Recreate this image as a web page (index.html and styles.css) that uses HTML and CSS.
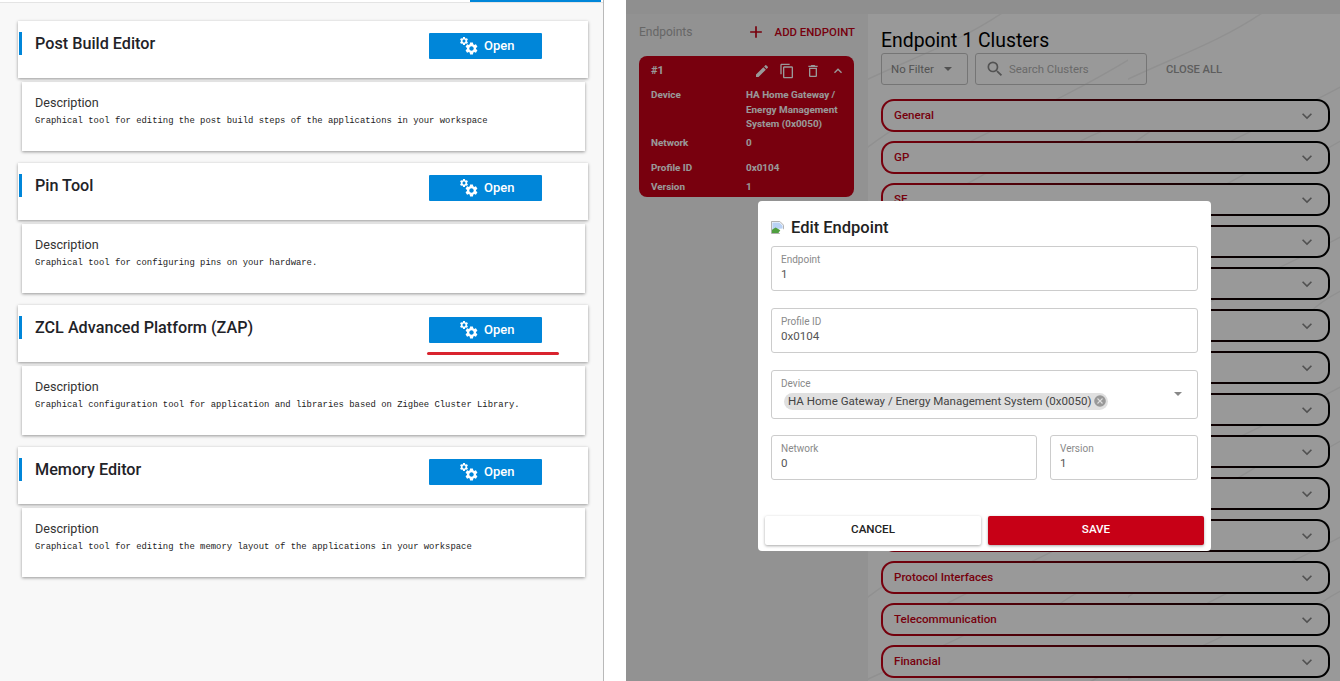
FILE: index.html
```html
<!DOCTYPE html>
<html lang="en">
<head>
<meta charset="utf-8">
<title>Edit Endpoint</title>
<link rel="stylesheet" href="styles.css">
</head>
<body>
<svg class="defs" width="0" height="0" aria-hidden="true">
  <symbol id="gear" viewBox="0 0 24 24"><path d="M19.14 12.94c.04-.3.06-.61.06-.94 0-.32-.02-.64-.07-.94l2.03-1.58a.49.49 0 0 0 .12-.61l-1.92-3.32a.488.488 0 0 0-.59-.22l-2.39.96c-.5-.38-1.03-.7-1.62-.94l-.36-2.54a.484.484 0 0 0-.48-.41h-3.84c-.24 0-.43.17-.47.41l-.36 2.54c-.59.24-1.13.57-1.62.94l-2.39-.96c-.22-.08-.47 0-.59.22L2.74 8.87c-.12.21-.08.47.12.61l2.03 1.58c-.05.3-.09.63-.09.94s.02.64.07.94l-2.03 1.58a.49.49 0 0 0-.12.61l1.92 3.32c.12.22.37.29.59.22l2.39-.96c.5.38 1.03.7 1.62.94l.36 2.54c.05.24.24.41.48.41h3.84c.24 0 .44-.17.47-.41l.36-2.54c.59-.24 1.13-.56 1.62-.94l2.39.96c.22.08.47 0 .59-.22l1.92-3.32c.12-.22.07-.47-.12-.61l-2.01-1.58zM12 15.6c-1.98 0-3.6-1.62-3.6-3.6s1.62-3.6 3.6-3.6 3.6 1.62 3.6 3.6-1.62 3.6-3.6 3.6z"/></symbol>
  <symbol id="cogs" viewBox="0 0 20 20"><use href="#gear" x="0" y="0" width="10" height="10"/><use href="#gear" x="5" y="5" width="15" height="15"/></symbol>
  <symbol id="more" viewBox="0 0 24 24"><path d="M16.59 8.59L12 13.17 7.41 8.59 6 10l6 6 6-6z"/></symbol>
  <pattern id="wave" width="260" height="150" patternUnits="userSpaceOnUse">
    <path d="M-10 70C40 45 90 30 140 -5M60 150C120 115 190 90 270 40M-20 150C0 130 20 120 40 105M180 150C200 130 235 115 270 105" fill="none" stroke="#f1f1f1" stroke-width="1.5"/>
  </pattern>
</svg>

<main class="left">
  <div class="tabstrip"><span class="tab"></span></div>

  <section class="tool">
    <header class="tool-head">
      <h2 class="tool-title">Post Build Editor</h2>
      <button class="open"><svg class="cogs"><use href="#cogs"/></svg>Open</button>
    </header>
    <div class="tool-desc">
      <h3 class="desc-title">Description</h3>
      <p class="desc-text">Graphical tool for editing the post build steps of the applications in your workspace</p>
    </div>
  </section>

  <section class="tool">
    <header class="tool-head">
      <h2 class="tool-title">Pin Tool</h2>
      <button class="open"><svg class="cogs"><use href="#cogs"/></svg>Open</button>
    </header>
    <div class="tool-desc">
      <h3 class="desc-title">Description</h3>
      <p class="desc-text">Graphical tool for configuring pins on your hardware.</p>
    </div>
  </section>

  <section class="tool">
    <header class="tool-head">
      <h2 class="tool-title">ZCL Advanced Platform (ZAP)</h2>
      <button class="open"><svg class="cogs"><use href="#cogs"/></svg>Open</button>
      <span class="underline"></span>
    </header>
    <div class="tool-desc">
      <h3 class="desc-title">Description</h3>
      <p class="desc-text">Graphical configuration tool for application and libraries based on Zigbee Cluster Library.</p>
    </div>
  </section>

  <section class="tool">
    <header class="tool-head">
      <h2 class="tool-title">Memory Editor</h2>
      <button class="open"><svg class="cogs"><use href="#cogs"/></svg>Open</button>
    </header>
    <div class="tool-desc">
      <h3 class="desc-title">Description</h3>
      <p class="desc-text">Graphical tool for editing the memory layout of the applications in your workspace</p>
    </div>
  </section>
</main>

<div class="app">
  <div class="topband"></div>
  <div class="columns">
    <aside class="endpoints">
      <div class="ep-head">
        <span class="ep-label">Endpoints</span>
        <span class="ep-add"><svg class="ep-plus" viewBox="0 0 24 24"><path d="M19 13h-6v6h-2v-6H5v-2h6V5h2v6h6v2z"/></svg>ADD ENDPOINT</span>
      </div>
      <div class="ep-card">
        <div class="ep-card-top">
          <span class="ep-num">#1</span>
          <span class="ep-actions">
            <svg class="ep-icon" viewBox="0 0 24 24"><path d="M3 17.25V21h3.75L17.81 9.94l-3.75-3.75L3 17.25zM20.71 7.04a1 1 0 0 0 0-1.41l-2.34-2.34a1 1 0 0 0-1.41 0l-1.83 1.83 3.75 3.75 1.83-1.83z"/></svg>
            <svg class="ep-icon" viewBox="0 0 24 24"><path d="M16 1H4c-1.1 0-2 .9-2 2v14h2V3h12V1zm3 4H8c-1.1 0-2 .9-2 2v14c0 1.1.9 2 2 2h11c1.1 0 2-.9 2-2V7c0-1.1-.9-2-2-2zm0 16H8V7h11v14z"/></svg>
            <svg class="ep-icon" viewBox="0 0 24 24"><path d="M6 19c0 1.1.9 2 2 2h8c1.1 0 2-.9 2-2V7H6v12zM8 9h8v10H8V9zm7.5-5l-1-1h-5l-1 1H5v2h14V4z"/></svg>
            <svg class="ep-icon" viewBox="0 0 24 24"><path d="M12 8l-6 6 1.41 1.41L12 10.83l4.59 4.58L18 14z"/></svg>
          </span>
        </div>
        <dl class="ep-grid">
          <dt>Device</dt><dd>HA Home Gateway / Energy Management System (0x0050)</dd>
          <dt>Network</dt><dd>0</dd>
          <dt>Profile ID</dt><dd>0x0104</dd>
          <dt>Version</dt><dd>1</dd>
        </dl>
      </div>
    </aside>

    <section class="clusters">
      <svg class="waves" aria-hidden="true"><rect width="100%" height="100%" fill="url(#wave)"/></svg>
      <h1 class="cl-title">Endpoint 1 Clusters</h1>
      <div class="cl-tools">
        <div class="cl-filter">No Filter<span class="caret"></span></div>
        <div class="cl-search"><svg class="cl-search-icon" viewBox="0 0 24 24"><path d="M15.5 14h-.79l-.28-.27A6.471 6.471 0 0 0 16 9.5 6.5 6.5 0 1 0 9.5 16c1.61 0 3.09-.59 4.23-1.57l.27.28v.79l5 4.99L20.49 19l-4.99-5zm-6 0C7.01 14 5 11.99 5 9.5S7.01 5 9.5 5 14 7.01 14 9.5 11.99 14 9.5 14z"/></svg>Search Clusters</div>
        <span class="cl-close">CLOSE ALL</span>
      </div>
      <ul class="cl-list">
        <li class="cl-row"><span>General</span><svg class="chev"><use href="#more"/></svg></li>
        <li class="cl-row"><span>GP</span><svg class="chev"><use href="#more"/></svg></li>
        <li class="cl-row"><span>SE</span><svg class="chev"><use href="#more"/></svg></li>
        <li class="cl-row"><span></span><svg class="chev"><use href="#more"/></svg></li>
        <li class="cl-row"><span></span><svg class="chev"><use href="#more"/></svg></li>
        <li class="cl-row"><span></span><svg class="chev"><use href="#more"/></svg></li>
        <li class="cl-row"><span></span><svg class="chev"><use href="#more"/></svg></li>
        <li class="cl-row"><span></span><svg class="chev"><use href="#more"/></svg></li>
        <li class="cl-row"><span></span><svg class="chev"><use href="#more"/></svg></li>
        <li class="cl-row"><span></span><svg class="chev"><use href="#more"/></svg></li>
        <li class="cl-row"><span></span><svg class="chev"><use href="#more"/></svg></li>
        <li class="cl-row"><span>Protocol Interfaces</span><svg class="chev"><use href="#more"/></svg></li>
        <li class="cl-row"><span>Telecommunication</span><svg class="chev"><use href="#more"/></svg></li>
        <li class="cl-row"><span>Financial</span><svg class="chev"><use href="#more"/></svg></li>
      </ul>
    </section>
  </div>

  <div class="scrim">
    <div class="modal">
      <h2 class="modal-title">
        <svg class="broken" viewBox="0 0 14 14"><path fill="#fff" stroke="#a9a9a9" d="M.5.5h9l4 4v9H.5z"/><path fill="#b9d2f5" d="M1.5 1.5h7.5l3.5 3.5v3l-11 1z"/><path fill="#4f9f3f" d="M1 13V9.5l4-2.5 5 3-2 3z"/><path fill="#fff" d="M9 14l5-6v6z"/></svg>
        Edit Endpoint
      </h2>
      <div class="field"><label>Endpoint</label><div class="value">1</div></div>
      <div class="field"><label>Profile ID</label><div class="value">0x0104</div></div>
      <div class="field field-device">
        <label>Device</label>
        <div class="chip">HA Home Gateway / Energy Management System (0x0050)<svg class="chip-x" viewBox="0 0 24 24"><path d="M12 2a10 10 0 1 0 0 20 10 10 0 0 0 0-20zm5 13.59L15.59 17 12 13.41 8.41 17 7 15.59 10.59 12 7 8.41 8.41 7 12 10.59 15.59 7 17 8.41 13.41 12 17 15.59z"/></svg></div>
        <span class="caret caret-device"></span>
      </div>
      <div class="field-row">
        <div class="field field-network"><label>Network</label><div class="value">0</div></div>
        <div class="field field-version"><label>Version</label><div class="value">1</div></div>
      </div>
      <div class="actions">
        <button class="btn btn-cancel">CANCEL</button>
        <button class="btn btn-save">SAVE</button>
      </div>
    </div>
  </div>
</div>
</body>
</html>
```

FILE: styles.css
```css
* { box-sizing: border-box; }
html, body { height: 100%; }
body {
  margin: 0;
  width: 1340px;
  height: 681px;
  overflow: hidden;
  display: flex;
  gap: 22px;
  background: #fff;
  font-family: Roboto, "Liberation Sans", sans-serif;
  color: #222;
}
.defs { position: absolute; }

/* Left panel */
.left {
  width: 604px;
  height: 681px;
  flex: none;
  background: #f8f8f8;
  border-right: 1px solid #b9b9b9;
}
.tabstrip {
  height: 3px;
  display: flex;
  justify-content: flex-end;
  padding-right: 2px;
  border-bottom: 1px solid #e4e4e4;
  background: #fff;
  margin-bottom: 18px;
}
.tab { width: 131px; height: 2px; background: #0086d9; }
.tool { margin-bottom: 12px; height: 130px; }
.tool-head {
  position: relative;
  margin-left: 18px;
  width: 570px;
  height: 57px;
  background: #fff;
  box-shadow: 0 1px 3px rgba(0,0,0,.4);
  padding: 13px 46px 0 17px;
  display: flex;
  justify-content: space-between;
  align-items: flex-start;
}
.tool-head::before {
  content: "";
  position: absolute;
  left: 1px;
  top: 11px;
  width: 3px;
  height: 23px;
  background: #0086d9;
}
.tool-title { margin: 0; font-size: 16.2px; line-height: 20px; font-weight: 500; color: #1f2328; }
.open {
  width: 113px;
  height: 26px;
  margin-top: -1px;
  border: 0;
  border-radius: 1px;
  background: #0086d9;
  color: #fff;
  font: 500 13px Roboto, sans-serif;
  display: flex;
  align-items: center;
  justify-content: flex-start;
  padding: 0 0 2px 30px;
  gap: 5px;
}
.cogs { width: 20px; height: 20px; fill: #fff; flex: none; margin-top: 2px; }
.underline {
  position: absolute;
  left: 409px;
  top: 47px;
  width: 132px;
  height: 3px;
  border-radius: 2px;
  background: #d9232e;
}
.tool-desc {
  margin: 4px 0 0 22px;
  width: 563px;
  height: 69px;
  background: #fff;
  box-shadow: 0 1px 3px rgba(0,0,0,.4);
  padding: 13px 13px 0;
}
.desc-title { margin: 0; font-size: 12.6px; line-height: 16px; font-weight: 400; color: #333; }
.desc-text { margin: 3px 0 0; font: 8.9px/14px "Liberation Mono", monospace; color: #222; white-space: nowrap; }

/* Right application */
.app {
  position: relative;
  width: 714px;
  height: 681px;
  flex: none;
  overflow: hidden;
  background: #f3f3f3;
  display: flex;
  flex-direction: column;
}
.topband { height: 14px; flex: none; background: #eeeeee; }
.columns { flex: 1; display: flex; min-height: 0; }
.endpoints {
  width: 242px;
  flex: none;
  padding: 8px 13px 0 13px;
}
.ep-head { height: 20px; display: flex; justify-content: space-between; align-items: center; margin-bottom: 14px; }
.ep-label { font-size: 12px; color: #ababab; }
.ep-add { display: flex; align-items: center; gap: 9px; font-size: 11.4px; font-weight: 500; color: #c70016; }
.ep-plus { width: 20px; height: 20px; fill: #c70016; }
.ep-card {
  width: 215px;
  height: 141px;
  border-radius: 8px;
  background: #c80018;
  color: #fff;
  padding: 5px 12px 0 12px;
  font-size: 9.9px;
  font-weight: 700;
}
.ep-card-top { height: 18px; display: flex; justify-content: space-between; align-items: center; font-size: 11px; margin-bottom: 9px; }
.ep-actions { display: flex; gap: 9.4px; margin-right: -4px; margin-top: 1px; }
.ep-icon { width: 16px; height: 16px; fill: #fff; }
.ep-grid {
  margin: 0;
  display: grid;
  grid-template-columns: 95px 1fr;
  grid-template-rows: 48px 25px 19px 14px;
  line-height: 14.5px;
}
.ep-grid dt { font-weight: 700; }
.ep-grid dd { margin: 0; }

.clusters { position: relative; flex: 1; background: #fff; padding: 14px 10px 0 13px; min-width: 0; }
.waves { position: absolute; inset: 0; width: 100%; height: 100%; }
.cl-title { position: relative; margin: 0; font-size: 19.4px; line-height: 25px; font-weight: 400; color: #000; }
.cl-tools { position: relative; display: flex; align-items: center; height: 32px; margin-bottom: 14px; font-size: 11.4px; color: #8a8a8a; }
.cl-filter, .cl-search {
  height: 32px;
  border: 1px solid #c4c4c4;
  border-radius: 3px;
  display: flex;
  align-items: center;
}
.cl-filter { width: 87px; padding-left: 9px; margin-right: 7px; }
.caret { width: 0; height: 0; border: 4px solid transparent; border-top-color: #888; border-bottom: 0; margin-left: 10px; }
.cl-search { width: 172px; padding-left: 9px; color: #b0b0b0; }
.cl-search-icon { width: 20px; height: 20px; fill: #8a8a8a; margin-right: 4px; }
.cl-close { margin-left: 19px; font-size: 11.2px; font-weight: 500; color: #9c9c9c; }
.cl-list { position: relative; margin: 0; padding: 0; list-style: none; display: flex; flex-direction: column; gap: 9px; }
.cl-row {
  height: 33px;
  flex: none;
  border: 2px solid transparent;
  border-radius: 13px;
  background: linear-gradient(#fff, #fff) padding-box, linear-gradient(90deg, #c70016, #000 85%) border-box;
  padding: 0 11px 2px 11px;
  display: flex;
  align-items: center;
  justify-content: space-between;
  font-size: 11.6px;
  font-weight: 500;
  color: #c70016;
}
.chev { width: 20px; height: 20px; fill: #888; margin-top: 2px; }

/* Modal */
.scrim {
  position: absolute;
  inset: 0;
  background: rgba(0,0,0,.4);
  padding: 201px 0 0 132px;
}
.modal {
  width: 453px;
  height: 350px;
  background: #fff;
  border-radius: 4px;
  padding: 15px 13px 0 13px;
}
.modal-title {
  display: flex;
  align-items: center;
  gap: 7px;
  margin: 0 0 8px;
  height: 22px;
  font-size: 16.5px;
  font-weight: 500;
  color: #222;
}
.broken { width: 13px; height: 13px; flex: none; }
.field {
  height: 45px;
  border: 1px solid #ccc;
  border-radius: 3px;
  padding: 6px 9px 0;
  margin-bottom: 17px;
  position: relative;
}
.field label { display: block; font-size: 10px; line-height: 13px; color: #8a8a8a; }
.value { font-size: 11.6px; line-height: 16px; color: #555; margin-top: 0; }
.field-device { height: 49px; margin-bottom: 16px; }
.chip {
  display: inline-flex;
  align-items: center;
  height: 17px;
  margin: 0 0 0 3px;
  padding: 0 1px 0 4px;
  border-radius: 9px;
  background: #e0e0e0;
  font-size: 11.55px;
  color: #444;
  white-space: nowrap;
}
.chip-x { width: 14px; height: 14px; fill: #999; margin-left: 2px; }
.caret-device { position: absolute; right: 15px; top: 21px; margin: 0; }
.field-row { display: flex; gap: 13px; }
.field-network { width: 266px; }
.field-version { width: 148px; }
.actions { display: flex; gap: 7px; margin: 19px -6px 0; }
.btn {
  width: 216px;
  height: 29px;
  border: 0;
  border-radius: 2px;
  padding: 0 0 4px;
  font: 500 11.6px Roboto, sans-serif;
  box-shadow: 0 1px 3px rgba(0,0,0,.35);
}
.btn-cancel { background: #fff; color: #222; }
.btn-save { background: #c70016; color: #fff; }
```
